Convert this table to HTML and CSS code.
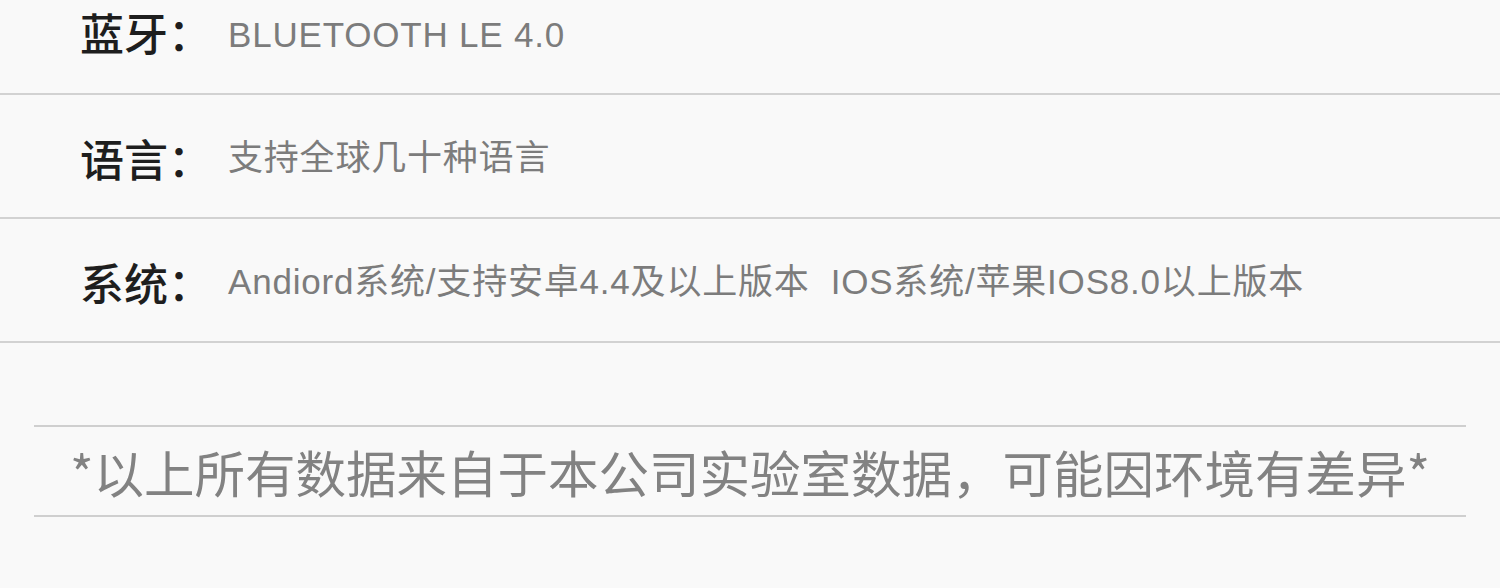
FILE: index.html
```html
<!DOCTYPE html>
<html lang="zh-CN">
    <head>
        <meta charset="utf-8">
        <title>产品参数</title>
        <link rel="stylesheet" href="styles.css">
    </head>
    <body>
        <main>
            <ul class="specs">
                <li class="spec first">
                    <span class="label">蓝牙：</span>
                    <span class="value">BLUETOOTH LE 4.0</span>
                </li>
                <li class="spec">
                    <span class="label">语言：</span>
                    <span class="value">支持全球几十种语言</span>
                </li>
                <li class="spec">
                    <span class="label">系统：</span>
                    <span class="value">Andiord系统/支持安卓4.4及以上版本&nbsp;&nbsp;IOS系统/苹果IOS8.0以上版本</span>
                </li>
            </ul>
            <p class="note">*以上所有数据来自于本公司实验室数据，可能因环境有差异*</p>
        </main>
    </body>
</html>
```

FILE: styles.css
```css
body {
    margin: 0;
    background-color: #f9f9f9;
    font-family: "Liberation Sans", "Noto Sans CJK SC", sans-serif;
}

main {
    display: flex;
    flex-direction: column;
}

.specs {
    list-style: none;
    margin: 0;
    padding: 0;
}

.spec {
    display: flex;
    align-items: center;
    box-sizing: border-box;
    height: 124px;
    padding: 4px 0 0 80px;
    border-bottom: 2px solid #d2d2d2;
}

.spec.first {
    height: 95px;
    padding-top: 0;
    align-items: flex-start;
}

.spec.first .label {
    margin-top: 8px;
}

.spec.first .value {
    margin-top: 14px;
}

.label {
    width: 148px;
    flex-shrink: 0;
    font-family: "Noto Sans CJK SC", sans-serif;
    font-size: 44px;
    font-weight: 500;
    line-height: 1.1;
    color: #1e1e1e;
}

.value {
    font-size: 35px;
    line-height: 1.2;
    letter-spacing: 0.8px;
    color: #7c7c7c;
}

.note {
    margin: 82px 34px 0;
    height: 88px;
    display: flex;
    align-items: center;
    justify-content: center;
    border-top: 2px solid #cfcfcf;
    border-bottom: 2px solid #cfcfcf;
    font-family: "Noto Sans CJK SC", sans-serif;
    font-size: 50.5px;
    color: #828282;
}
```
